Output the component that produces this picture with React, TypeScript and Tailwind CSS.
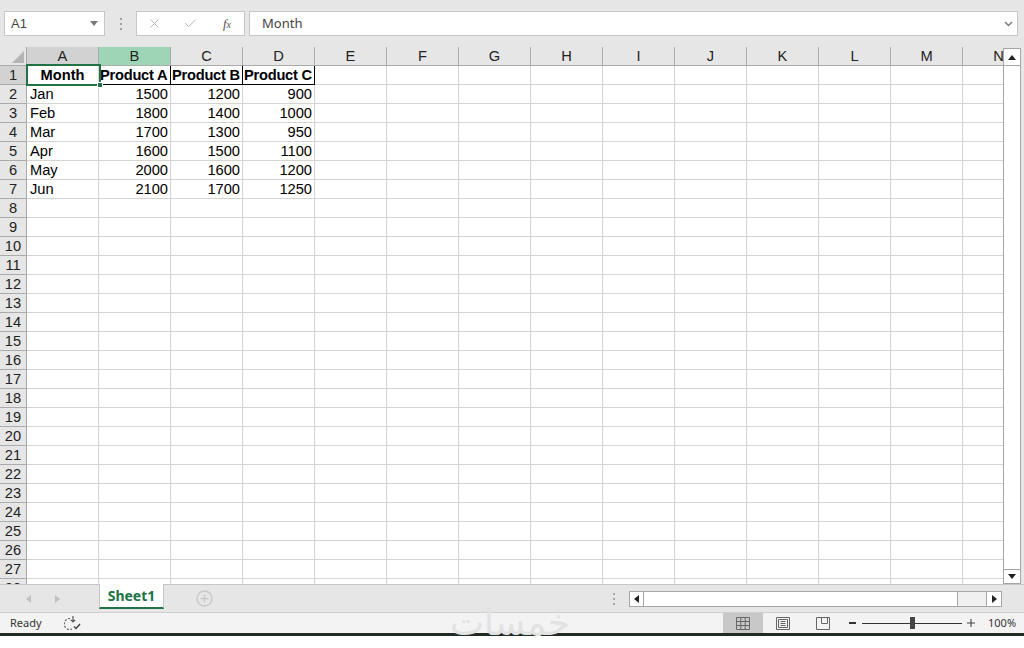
import { X, Check } from 'lucide-react';

const COLS = ['A', 'B', 'C', 'D', 'E', 'F', 'G', 'H', 'I', 'J', 'K', 'L', 'M', 'N'];

const DATA: (string | number)[][] = [
  ['Month', 'Product A', 'Product B', 'Product C'],
  ['Jan', 1500, 1200, 900],
  ['Feb', 1800, 1400, 1000],
  ['Mar', 1700, 1300, 950],
  ['Apr', 1600, 1500, 1100],
  ['May', 2000, 1600, 1200],
  ['Jun', 2100, 1700, 1250],
];

const ROW_COUNT = 28;

const font = { fontFamily: '"Liberation Sans", Arial, sans-serif' };

const Cell = ({ r, c }: { r: number; c: number }) => {
  const value = DATA[r]?.[c];
  const header = r === 0 && c < 4;
  const boxed = r === 0 && c >= 1 && c <= 3;
  const isNum = typeof value === 'number';

  let cls = 'h-[19px] border-r border-b overflow-hidden whitespace-nowrap leading-[18px] text-[14.67px] text-black ';
  cls += boxed ? 'border-black ' : 'border-[#d4d4d4] ';
  if (header) cls += 'font-bold ';
  if (boxed) cls += 'pl-[1px] tracking-[-0.25px] ';
  else if (c === 0 && r === 0) cls += 'text-center ';
  else if (isNum) cls += 'text-right pr-[2px] ';
  else cls += 'pl-[3px] ';

  return <div className={cls}>{value ?? ''}</div>;
};

const FormulaBar = () => (
  <div className="h-[47px] bg-[#e6e6e6] flex items-start pt-[11px] pl-[4px] gap-0">
    <div className="w-[101px] h-[25px] bg-white border border-[#c6c6c6] flex items-center justify-between pl-[6px] pr-[6px]">
      <span className="text-[13px] text-[#444]" style={font}>A1</span>
      <svg width="8" height="5" viewBox="0 0 8 5"><path d="M0 0h8L4 5z" fill="#7a7a7a" /></svg>
    </div>
    <div className="w-[31px] h-[25px] flex items-center justify-center">
      <div className="flex flex-col gap-[3px]">
        <div className="w-[2px] h-[2px] bg-[#a0a0a0]" />
        <div className="w-[2px] h-[2px] bg-[#a0a0a0]" />
        <div className="w-[2px] h-[2px] bg-[#a0a0a0]" />
      </div>
    </div>
    <div className="w-[109px] h-[25px] bg-white border border-[#c6c6c6] flex items-center">
      <div className="w-[34px] flex justify-center"><X size={15} strokeWidth={1.5} color="#b0b0b0" /></div>
      <div className="w-[38px] flex justify-center"><Check size={15} strokeWidth={1.5} color="#b0b0b0" /></div>
      <div className="w-[34px] flex justify-center pl-[2px]">
        <span className="italic text-[13px] text-[#555]" style={{ fontFamily: '"Liberation Serif", serif' }}>f<span className="text-[10px]">x</span></span>
      </div>
    </div>
    <div className="ml-[4px] w-[769px] h-[25px] bg-white border border-[#c6c6c6] flex items-center justify-between pl-[12px] pr-[4px]">
      <span className="text-[13px] text-[#444]" style={{ fontFamily: '"Noto Sans", sans-serif' }}>Month</span>
      <svg width="9" height="6" viewBox="0 0 9 6"><path d="M1 1l3.5 3.5L8 1" stroke="#777" strokeWidth="1.4" fill="none" /></svg>
    </div>
  </div>
);

const Grid = () => (
  <div className="relative w-[1003px] h-[537px] overflow-hidden bg-white" style={font}>
    <div className="grid grid-cols-[27px_repeat(14,72px)] auto-rows-[19px] w-[1035px]">
      <div className="bg-[#e6e6e6] border-r border-b border-[#ababab] relative">
        <svg className="absolute right-[2px] bottom-[2px]" width="12" height="12" viewBox="0 0 12 12"><path d="M12 0V12H0z" fill="#b4b4b4" /></svg>
      </div>
      {COLS.map((c, i) => (
        <div
          key={c}
          className={
            'border-r border-b border-[#ababab] text-center text-[14.67px] leading-[19px] text-[#222] ' +
            (i === 0 ? 'bg-[#d2d2d2]' : i === 1 ? 'bg-[#9fd5b7]' : 'bg-[#e6e6e6]')
          }
        >
          {c}
        </div>
      ))}
      {Array.from({ length: ROW_COUNT }).map((_, r) => (
        <div key={r} className="contents">
          <div
            className={
              'border-r border-b border-[#ababab] text-center text-[14.67px] leading-[18px] text-[#222] ' +
              (r === 0 ? 'bg-[#d2d2d2]' : 'bg-[#e6e6e6]')
            }
          >
            {r + 1}
          </div>
          {COLS.map((_, c) => (
            <Cell key={c} r={r} c={c} />
          ))}
        </div>
      ))}
    </div>
    {/* active cell selection */}
    <div className="absolute left-[26px] top-[17px] w-[75px] h-[22px] border-2 border-[#217346]" />
    <div className="absolute left-[97px] top-[35px] w-[6px] h-[6px] bg-[#217346] border border-white" />
  </div>
);

const VScroll = () => (
  <div className="w-[21px] h-[537px] bg-[#e6e6e6] flex flex-col pt-[1px]">
    <div className="w-[18px] h-[536px] border border-[#a6a6a6] bg-white flex flex-col">
      <div className="h-[17px] flex items-center justify-center border-b border-[#a6a6a6]">
        <svg width="8" height="5" viewBox="0 0 8 5"><path d="M4 0L8 5H0z" fill="#222" /></svg>
      </div>
      <div className="flex-1" />
      <div className="h-[14px] flex items-center justify-center border-t border-[#a6a6a6]">
        <svg width="8" height="5" viewBox="0 0 8 5"><path d="M0 0h8L4 5z" fill="#222" /></svg>
      </div>
    </div>
  </div>
);

const TabBar = () => (
  <div className="h-[28px] bg-[#e6e6e6] border-t border-[#c6c6c6] flex items-start relative">
    <div className="w-[99px] h-[27px] flex items-center pl-[26px] gap-[24px]">
      <svg width="5" height="8" viewBox="0 0 5 8"><path d="M5 0V8L0 4z" fill="#c0c0c0" /></svg>
      <svg width="5" height="8" viewBox="0 0 5 8"><path d="M0 0V8L5 4z" fill="#c0c0c0" /></svg>
    </div>
    <div className="-mt-px w-[65px] h-[25px] bg-white border-x border-[#c6c6c6] border-b-2 border-b-[#217346] flex items-center justify-center">
      <span className="text-[14px] font-bold text-[#217346]" style={{ fontFamily: '"Noto Sans", sans-serif' }}>Sheet1</span>
    </div>
    <div className="ml-[32px] h-[27px] flex items-center">
      <svg width="17" height="17" viewBox="0 0 17 17">
        <circle cx="8.5" cy="8.5" r="7.5" fill="none" stroke="#c8c8c8" strokeWidth="1.3" />
        <path d="M8.5 4.5v8M4.5 8.5h8" stroke="#c8c8c8" strokeWidth="1.3" />
      </svg>
    </div>
    <div className="ml-[400px] h-[27px] flex items-center">
      <div className="flex flex-col gap-[3px]">
        <div className="w-[2px] h-[2px] bg-[#a8a8a8]" />
        <div className="w-[2px] h-[2px] bg-[#a8a8a8]" />
        <div className="w-[2px] h-[2px] bg-[#a8a8a8]" />
      </div>
    </div>
    <div className="ml-[14px] mt-[6px] w-[373px] h-[16px] border border-[#a6a6a6] bg-[#f0f0f0] flex">
      <div className="w-[14px] h-full bg-white border-r border-[#a6a6a6] flex items-center justify-center">
        <svg width="5" height="8" viewBox="0 0 5 8"><path d="M5 0V8L0 4z" fill="#222" /></svg>
      </div>
      <div className="w-[314px] h-full bg-white border-r border-[#a6a6a6]" />
      <div className="flex-1" />
      <div className="w-[15px] h-full bg-white border-l border-[#a6a6a6] flex items-center justify-center">
        <svg width="5" height="8" viewBox="0 0 5 8"><path d="M0 0V8L5 4z" fill="#222" /></svg>
      </div>
    </div>
  </div>
);

const StatusBar = () => (
  <div className="h-[21px] bg-[#f3f3f3] border-t border-[#d0d0d0] flex items-center relative" style={{ fontFamily: '"Noto Sans", sans-serif' }}>
    <span className="ml-[10px] text-[11px] text-[#333]">Ready</span>
    <svg className="ml-[22px]" width="18" height="16" viewBox="0 0 18 16">
      <path d="M6 3.5A5.5 5.5 0 1 0 8 14" fill="none" stroke="#555" strokeWidth="1.2" strokeDasharray="2 1.6" />
      <path d="M9 1v6M6.8 4.8L9 7l2.2-2.2" fill="none" stroke="#555" strokeWidth="1.2" />
      <path d="M10 11.5l2 2 4-4.5" fill="none" stroke="#444" strokeWidth="1.5" />
    </svg>
    <span
      className="absolute left-[450px] top-[-8px] text-[36px] leading-none text-[#e2e2e2] select-none"
      style={{ fontFamily: '"DejaVu Sans", sans-serif' }}
    >
      خمسات
    </span>
    <div className="absolute left-[723px] top-0 h-[20px] flex items-center">
      <div className="w-[40px] h-[20px] bg-[#c8c8c8] flex items-center justify-center">
        <svg width="14" height="13" viewBox="0 0 14 13">
          <path d="M0.5 0.5h13v12h-13zM0.5 4.5h13M0.5 8.5h13M4.8 0.5v12M9.2 0.5v12" fill="none" stroke="#666" strokeWidth="1" />
        </svg>
      </div>
      <div className="w-[40px] flex items-center justify-center">
        <svg width="14" height="13" viewBox="0 0 14 13">
          <path d="M0.5 0.5h13v12h-13zM2.5 2.5h9v8h-9zM4.5 4.5h5M4.5 6.5h5M4.5 8.5h5" fill="none" stroke="#666" strokeWidth="1" />
        </svg>
      </div>
      <div className="w-[40px] flex items-center justify-center">
        <svg width="14" height="13" viewBox="0 0 14 13">
          <path d="M0.5 0.5h13v12h-13zM5.5 0.5v6h6v-6" fill="none" stroke="#666" strokeWidth="1" />
        </svg>
      </div>
      <div className="ml-[6px] w-[7px] h-[1.5px] bg-[#333]" />
      <div className="ml-[6px] w-[100px] h-[1px] bg-[#333] relative">
        <div className="absolute left-[48px] top-[-6px] w-[5px] h-[12px] bg-[#444]" />
      </div>
      <svg className="ml-[5px]" width="8" height="8" viewBox="0 0 8 8"><path d="M4 0v8M0 4h8" stroke="#444" strokeWidth="1.1" /></svg>
      <span className="ml-[13px] text-[11px] text-[#333]">100%</span>
    </div>
  </div>
);

export default function App() {
  return (
    <div className="w-[1024px] h-[648px] bg-white overflow-hidden flex flex-col">
      <FormulaBar />
      <div className="flex">
        <Grid />
        <VScroll />
      </div>
      <TabBar />
      <StatusBar />
      <div className="h-[3px] bg-[#202b24]" />
      <div className="flex-1 bg-white" />
    </div>
  );
}
